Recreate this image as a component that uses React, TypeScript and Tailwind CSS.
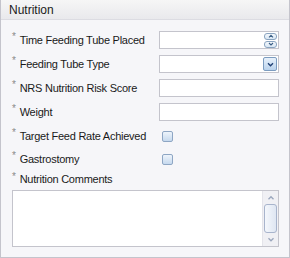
import { ReactNode } from 'react';

const font = { fontFamily: '"Liberation Sans", Arial, sans-serif' };

function Label({ children }: { children: ReactNode }) {
  return (
    <div className="flex w-[148px] shrink-0 items-center whitespace-nowrap text-[11px] tracking-[-0.25px] text-[#1a1a1a]">
      <span className="ml-[1px] mr-[4px] -translate-y-[3px] text-[10px] leading-none text-[#8a8a8a]">*</span>
      <span>{children}</span>
    </div>
  );
}

function TextBox({ children }: { children?: ReactNode }) {
  return (
    <div className="flex h-[18px] w-[120px] items-center justify-end border border-[#c4c4cc] bg-white pr-[1px]">
      {children}
    </div>
  );
}

function Chevron({ up = false, className = '' }: { up?: boolean; className?: string }) {
  return (
    <svg viewBox="0 0 8 6" className={className}>
      <path
        d={up ? 'M1 5 L4 2 L7 5' : 'M1 1.5 L4 4.5 L7 1.5'}
        fill="none"
        stroke="currentColor"
        strokeWidth="1.6"
      />
    </svg>
  );
}

function Spinner() {
  return (
    <div className="flex flex-col gap-[1px]">
      <div className="flex h-[7px] w-[13px] items-center justify-center rounded-[3px] border border-[#8aa4c0] bg-gradient-to-b from-[#f4f8fc] to-[#d8e6f4] text-[#3b5f86]">
        <Chevron up className="h-[4px] w-[6px]" />
      </div>
      <div className="flex h-[7px] w-[13px] items-center justify-center rounded-[3px] border border-[#8aa4c0] bg-gradient-to-b from-[#f4f8fc] to-[#d8e6f4] text-[#3b5f86]">
        <Chevron className="h-[4px] w-[6px]" />
      </div>
    </div>
  );
}

function DropButton() {
  return (
    <div className="flex h-[14px] w-[14px] items-center justify-center rounded-[2px] border border-[#7c9cc0] bg-gradient-to-b from-[#e8f1fb] to-[#b9d2ec] text-[#1f3f73]">
      <Chevron className="h-[5px] w-[7px]" />
    </div>
  );
}

function CheckBox() {
  return (
    <div className="h-[11px] w-[11px] rounded-[2px] border border-[#8ea6c4] bg-gradient-to-b from-[#eef4fb] to-[#c6d9ee]" />
  );
}

function Row({ label, children, className = '' }: { label: string; children?: ReactNode; className?: string }) {
  return (
    <div className={`flex h-6 items-center ${className}`}>
      <Label>{label}</Label>
      {children}
    </div>
  );
}

export default function App() {
  return (
    <div style={font} className="h-[258px] w-[290px] bg-white">
      <div className="flex h-full flex-col border-x border-b border-[#c4c4cc] bg-[#f6f6f9]">
        <div className="flex h-[20px] items-center border-b border-[#dcdce2] bg-gradient-to-b from-[#f6f6f6] to-[#e9e9ec] pl-[8px] text-[12px] text-[#1a1a1a]">
          Nutrition
        </div>
        <div className="flex flex-col pl-[10px] pt-[8px]">
          <Row label="Time Feeding Tube Placed">
            <TextBox>
              <Spinner />
            </TextBox>
          </Row>
          <Row label="Feeding Tube Type">
            <TextBox>
              <DropButton />
            </TextBox>
          </Row>
          <Row label="NRS Nutrition Risk Score">
            <TextBox />
          </Row>
          <Row label="Weight">
            <TextBox />
          </Row>
          <Row label="Target Feed Rate Achieved" className="h-[24px]">
            <div className="ml-[3px]">
              <CheckBox />
            </div>
          </Row>
          <Row label="Gastrostomy" className="h-[22px]">
            <div className="ml-[3px]">
              <CheckBox />
            </div>
          </Row>
          <Row label="Nutrition Comments" className="h-[19px]" />
          <div className="ml-[1px] mt-[1px] flex h-[57px] w-[267px] border border-[#c4c4cc] bg-white">
            <div className="flex-1" />
            <div className="flex w-[16px] flex-col border-l border-[#e4e4ea] bg-[#f0f0f4]">
              <div className="flex h-[13px] items-center justify-center text-[#9aa6bc]">
                <Chevron up className="h-[5px] w-[8px]" />
              </div>
              <div className="mx-[1px] flex-1 rounded-[3px] border border-[#a8b4cc] bg-gradient-to-r from-[#f4f7fc] to-[#dfe6f2]" />
              <div className="flex h-[13px] items-center justify-center text-[#9aa6bc]">
                <Chevron className="h-[5px] w-[8px]" />
              </div>
            </div>
          </div>
        </div>
      </div>
    </div>
  );
}
